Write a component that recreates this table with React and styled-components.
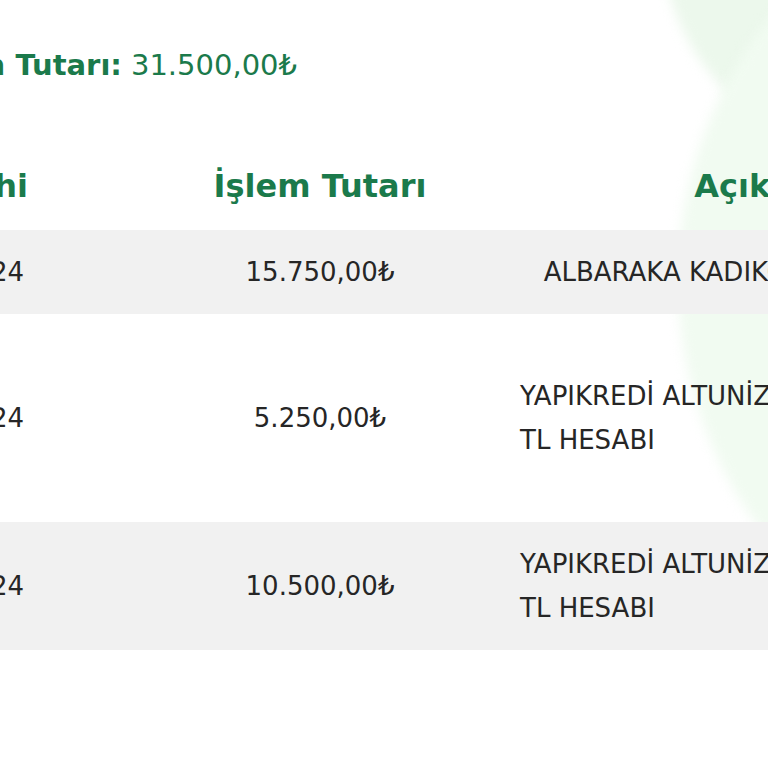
import React from 'react';
import styled, { createGlobalStyle } from 'styled-components';

const GREEN = '#1b7a4b';
const ROW_GREY = '#f1f1f1';

const GlobalStyle = createGlobalStyle`
  html, body {
    margin: 0;
    padding: 0;
    background: #ffffff;
  }
  body {
    font-family: "DejaVu Sans", Inter, "Liberation Sans", sans-serif;
    overflow: hidden;
  }
`;

const Page = styled.div`
  position: relative;
  width: 768px;
  height: 768px;
  overflow: hidden;
  background: #ffffff;
`;

// soft decorative circles in the background
const Blob = styled.div`
  position: absolute;
  left: ${(p) => p.$x}px;
  top: ${(p) => p.$y}px;
  width: ${(p) => p.$size}px;
  height: ${(p) => p.$size}px;
  border-radius: 50%;
  background: ${(p) => p.$color};
  filter: blur(6px);
`;

const Content = styled.div`
  position: relative;
  width: 1252px;
  margin-left: -220px;
  padding-top: 40px;
`;

const Summary = styled.div`
  padding-left: 11px;
  height: 50px;
  display: flex;
  align-items: center;
  gap: 9px;
  font-size: 29px;
  color: ${GREEN};
  white-space: nowrap;
`;

const SummaryLabel = styled.span`
  font-weight: 700;
`;

const SummaryValue = styled.span`
  font-weight: 400;
`;

const Table = styled.div`
  margin-top: 52px;
  display: flex;
  flex-direction: column;
`;

const Row = styled.div`
  display: grid;
  grid-template-columns: 340px 400px 512px;
  align-items: center;
  min-height: ${(p) => p.$height}px;
  background: ${(p) => (p.$striped ? ROW_GREY : 'transparent')};
`;

const HeadCell = styled.div`
  text-align: ${(p) => p.$align || 'center'};
  padding-right: ${(p) => (p.$align === 'right' ? '92px' : '0')};
  font-size: 32px;
  font-weight: 700;
  color: ${GREEN};
  white-space: nowrap;
`;

const Cell = styled.div`
  display: flex;
  justify-content: ${(p) => (p.$align === 'right' ? 'flex-end' : 'center')};
  padding-right: ${(p) => (p.$align === 'right' ? '96px' : '0')};
  font-size: 26px;
  font-weight: 400;
  color: #262626;
`;

const CellText = styled.span`
  display: block;
  max-width: 100%;
  text-align: left;
  line-height: 44px;
`;

const rows = [
  { date: '28.02.2024', amount: '15.750,00₺', desc: 'ALBARAKA KADIKÖY ŞUBESİ HESABI', height: 84, striped: true },
  { date: '12.03.2024', amount: '5.250,00₺', desc: 'YAPIKREDİ ALTUNİZADE KOBİ ŞUBESİ TL HESABI', height: 208, striped: false },
  { date: '27.03.2024', amount: '10.500,00₺', desc: 'YAPIKREDİ ALTUNİZADE KOBİ ŞUBESİ TL HESABI', height: 128, striped: true },
];

export default function App() {
  return (
    <Page>
      <GlobalStyle />
      <Blob $x={660} $y={-300} $size={460} $color="#ecf8ec" />
      <Blob $x={678} $y={-140} $size={840} $color="#f1fbf1" />
      <Content>
        <Summary>
          <SummaryLabel>Toplam İşlem Tutarı:</SummaryLabel>
          <SummaryValue>31.500,00₺</SummaryValue>
        </Summary>
        <Table>
          <Row $height={88}>
            <HeadCell $align="right">İşlem Tarihi</HeadCell>
            <HeadCell>İşlem Tutarı</HeadCell>
            <HeadCell>Açıklama</HeadCell>
          </Row>
          {rows.map((r) => (
            <Row key={r.date} $height={r.height} $striped={r.striped}>
              <Cell $align="right">{r.date}</Cell>
              <Cell>{r.amount}</Cell>
              <Cell>
                <CellText>{r.desc}</CellText>
              </Cell>
            </Row>
          ))}
        </Table>
      </Content>
    </Page>
  );
}
